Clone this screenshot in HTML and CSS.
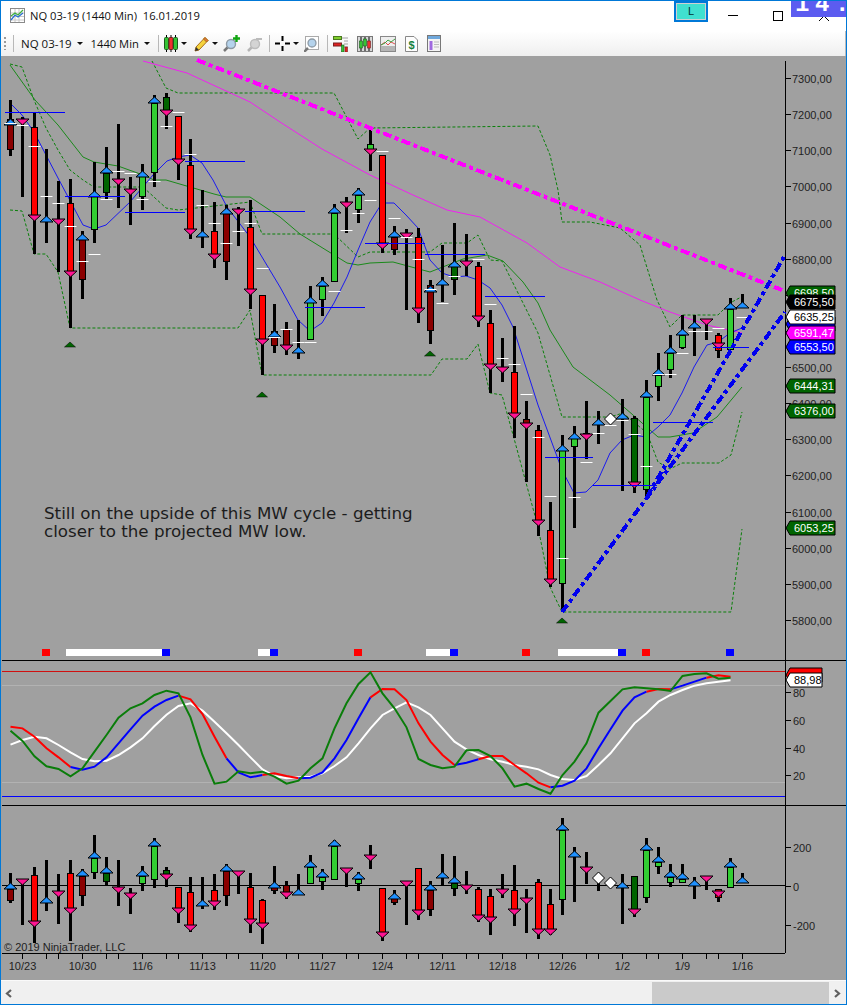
FILE: index.html
```html
<!DOCTYPE html>
<html>

<head>
    <meta charset="utf-8">
    <title>NQ 03-19 (1440 Min)</title>
    <link rel="stylesheet" href="styles.css">
</head>

<body>
    <div class="window">
        <div class="titlebar">
            <svg class="app_icon" width="15" height="15" viewBox="0 0 15 15">
                <rect x="0.5" y="0.5" width="14" height="14" fill="#fff" stroke="#8a8a8a"/>
                <path d="M1 5H14M1 8.5H14M1 12H14M5 1V14M9 1V14" stroke="#c8c8c8" fill="none"/>
                <path d="M1 12L5 7L8 9L13 5" stroke="#2b6fd0" stroke-width="1.3" fill="none"/>
                <path d="M1 8L5 5L8 7L13 2" stroke="#3fae3f" stroke-width="1.3" fill="none"/>
            </svg>
            <span class="title_text">NQ 03-19 (1440 Min)&nbsp; 16.01.2019</span>
            <div class="link_btn"><span>L</span></div>
            <div class="win_min"></div>
            <div class="win_max"></div>
            <svg class="win_close" width="10" height="10" viewBox="0 0 10 10">
                <path d="M0 0L10 10M10 0L0 10" stroke="#000" fill="none"/>
            </svg>
        </div>
        <div class="badge"><span>14.</span></div>

        <div class="toolbar">
            <div class="grip"></div>
            <div class="sep"></div>
            <span class="tb_label">NQ 03-19</span>
            <div class="caret"></div>
            <span class="tb_label tb_label2">1440 Min</span>
            <div class="caret"></div>
            <div class="sep sep_wide"></div>

            <svg class="tool near" width="14" height="17" viewBox="0 0 14 17">
                <path d="M2.5 0V17M7 0V17M11.5 0V17" stroke="#000"/>
                <rect x="0.5" y="2.5" width="4" height="12" rx="1" fill="#35c435" stroke="#1c5c1c"/>
                <rect x="5" y="2.5" width="4" height="12" rx="1" fill="#ef3030" stroke="#702020"/>
                <rect x="9.5" y="2.5" width="4" height="12" rx="1" fill="#35c435" stroke="#1c5c1c"/>
            </svg>
            <div class="caret"></div>

            <svg class="tool" width="15" height="16" viewBox="0 0 15 16">
                <path d="M1 15L2 11L11 1.5L14 4.5L5 14Z" fill="#f5d33c" stroke="#a8701c"/>
                <path d="M11 1.5L14 4.5L12.5 6L9.5 3Z" fill="#e8753c" stroke="#a8701c"/>
                <path d="M1 15L2 11L5 14Z" fill="#333"/>
            </svg>
            <div class="caret"></div>

            <svg class="tool near" width="17" height="17" viewBox="0 0 17 17">
                <path d="M1 16L5 12" stroke="#777" stroke-width="2.5"/>
                <circle cx="8" cy="9" r="4.5" fill="#b5d3ec" stroke="#8d9aa5" stroke-width="1.4"/>
                <path d="M13.5 0V7M10 3.5H17" stroke="#12a512" stroke-width="2.4"/>
            </svg>
            <svg class="tool" width="15" height="16" viewBox="0 0 15 16">
                <path d="M1 15L5 11" stroke="#b5b5b5" stroke-width="2.5"/>
                <circle cx="8" cy="8" r="4.5" fill="#d4d4d4" stroke="#bcbcbc" stroke-width="1.4"/>
                <path d="M9 3H15" stroke="#bbb" stroke-width="2"/>
            </svg>
            <div class="sep"></div>

            <svg class="tool near" width="15" height="15" viewBox="0 0 15 15">
                <path d="M7.5 0V5M7.5 10V15M0 7.5H5M10 7.5H15" stroke="#000" stroke-width="2"/>
            </svg>
            <div class="caret"></div>

            <svg class="tool near" width="15" height="16" viewBox="0 0 15 16">
                <rect x="1.5" y="0.5" width="13" height="13" fill="#fff" stroke="#aaa"/>
                <path d="M0 16L4 12" stroke="#777" stroke-width="2.5"/>
                <circle cx="8" cy="7" r="4" fill="#b5d3ec" stroke="#8d9aa5" stroke-width="1.3"/>
            </svg>
            <div class="sep sep_wide"></div>

            <svg class="tool near" width="15" height="17" viewBox="0 0 15 17">
                <path d="M9 3H15M11 6H15M11 9H15M11 12H15" stroke="#a0a0a0"/>
                <rect x="0.5" y="1.5" width="8" height="3" fill="#7fce2c" stroke="#4a7a20"/>
                <rect x="0.5" y="8" width="8" height="3" fill="#e02020" stroke="#7a2020"/>
                <rect x="8.5" y="10" width="2.5" height="7" fill="#35c435" stroke="#1c5c1c" stroke-width="0.6"/>
                <rect x="12" y="12" width="2.5" height="5" fill="#e02020" stroke="#7a2020" stroke-width="0.6"/>
            </svg>
            <svg class="tool wide" width="16" height="16" viewBox="0 0 16 16">
                <rect x="0.5" y="0.5" width="15" height="15" fill="#d8d8d8" stroke="#777"/>
                <path d="M4 1V15M8 1V15M12 1V15" stroke="#000"/>
                <rect x="2.5" y="5" width="3" height="7" fill="#35c435" stroke="#1c5c1c" stroke-width="0.6"/>
                <rect x="6.5" y="3" width="3" height="7" fill="#35c435" stroke="#1c5c1c" stroke-width="0.6"/>
                <rect x="10.5" y="5" width="3" height="7" fill="#ef3030" stroke="#702020" stroke-width="0.6"/>
            </svg>
            <svg class="tool" width="16" height="16" viewBox="0 0 16 16">
                <rect x="0.5" y="0.5" width="15" height="15" fill="#eeeeee" stroke="#888"/>
                <rect x="1" y="10" width="14" height="5" fill="#b5b5b5"/>
                <path d="M1 9L5 6L8 9L11 6L15 8" stroke="#e05050" fill="none"/>
                <path d="M1 9L5 7L8 4L11 6L15 3" stroke="#40a040" fill="none"/>
            </svg>
            <svg class="tool wide" width="13" height="16" viewBox="0 0 13 16">
                <path d="M0.5 0.5H9L12.5 4V15.5H0.5Z" fill="#fdfdfd" stroke="#888"/>
                <text class="dollar" x="6.5" y="12.5">$</text>
            </svg>
            <svg class="tool wide" width="14" height="17" viewBox="0 0 14 17">
                <rect x="0.5" y="0.5" width="13" height="16" fill="#f4f4f4" stroke="#777"/>
                <rect x="1" y="1" width="12" height="3" fill="#6fa8dc"/>
                <rect x="2.5" y="6" width="3" height="9" fill="#a06ae0"/>
                <path d="M7 7H12M7 9.5H12M7 12H12" stroke="#bbb"/>
            </svg>
            <div class="tb_end"></div>
        </div>

        <div class="chart_area">
            <svg id="chart" viewBox="1 56 845 924" width="845" height="924"></svg>
        </div>

        <div class="scrollbar">
            <svg class="arrow" width="8" height="9" viewBox="0 0 8 9">
                <path d="M6 1L2 4.5L6 8" stroke="#606060" stroke-width="2.2" fill="none"/>
            </svg>
            <div class="track"><div class="thumb"></div></div>
            <svg class="arrow" width="8" height="9" viewBox="0 0 8 9">
                <path d="M2 1L6 4.5L2 8" stroke="#606060" stroke-width="2.2" fill="none"/>
            </svg>
        </div>
    </div>
    <script src="chart.js"></script>
</body>

</html>
```

FILE: styles.css
```css
* {
    box-sizing: border-box;
}

body {
    margin: 0;
    width: 847px;
    height: 1005px;
    overflow: hidden;
    font-family: "Liberation Sans", Arial, sans-serif;
}

.window {
    position: relative;
    width: 847px;
    height: 1005px;
    border: 1px solid #0078d7;
    display: flex;
    flex-direction: column;
    background: #fff;
    overflow: hidden;
}

.titlebar {
    height: 30px;
    display: flex;
    align-items: center;
    padding-left: 9px;
    flex: none;
}

.app_icon {
    margin-top: -1px;
}

.title_text {
    margin-left: 5px;
    font-family: "Open Sans", sans-serif;
    font-size: 11.2px;
    color: #111;
    margin-top: -1px;
}

.link_btn {
    margin-left: auto;
    margin-top: -10px;
    width: 34px;
    height: 21px;
    border: 2px solid #0078d7;
    background: #40e0d0;
    box-shadow: inset 0 0 0 1px #d0d0d0;
    font-size: 11px;
    color: #033;
    text-align: center;
    line-height: 16px;
}

.win_min {
    margin-left: 20px;
    margin-top: -1px;
    width: 10px;
    height: 1px;
    background: #000;
}

.win_max {
    margin-left: 35px;
    margin-top: -1px;
    width: 10px;
    height: 10px;
    border: 1px solid #000;
}

.win_close {
    margin-left: 36px;
    margin-right: 17px;
    margin-top: -1px;
}

.badge {
    position: absolute;
    top: -1px;
    right: -1px;
    width: 56px;
    height: 17px;
    background: #5c5cf0;
    overflow: hidden;
}

.badge span {
    position: absolute;
    left: 4px;
    bottom: 0;
    font-family: "Liberation Mono", monospace;
    font-weight: bold;
    font-size: 24px;
    letter-spacing: 5.6px;
    line-height: 24px;
    color: #fff;
    white-space: pre;
}

.toolbar {
    height: 25px;
    flex: none;
    display: flex;
    align-items: center;
    padding-left: 3px;
    background: linear-gradient(#ffffff, #efefef);
}

.grip {
    width: 2px;
    height: 13px;
    background: repeating-linear-gradient(#9a9a9a 0 2px, transparent 2px 4px);
}

.sep {
    width: 1px;
    height: 17px;
    margin-left: 7px;
    background: #b8b8b8;
}

.sep_wide {
    margin-left: 8px;
}

.tb_label {
    margin-left: 7px;
    padding-right: 2px;
    font-family: "Open Sans", sans-serif;
    font-size: 11.5px;
    color: #111;
}

.tb_label2 {
    margin-left: 8px;
    font-size: 11.2px;
}

.caret {
    margin-left: 3px;
    width: 0;
    height: 0;
    border-left: 3px solid transparent;
    border-right: 3px solid transparent;
    border-top: 3px solid #111;
}

.tool {
    margin-left: 7px;
    flex: none;
}

.near {
    margin-left: 5px;
}

.wide {
    margin-left: 9px;
}

.dollar {
    font-family: "Liberation Sans", sans-serif;
    font-weight: bold;
    font-size: 11px;
    text-anchor: middle;
    fill: #16803c;
}

.tb_end {
    margin-left: auto;
    width: 3px;
    height: 25px;
    border-right: 1px solid #bbb;
}

.chart_area {
    height: 924px;
    flex: none;
    background: #a0a0a0;
}

#chart {
    display: block;
}

.scrollbar {
    flex: 1;
    display: flex;
    align-items: center;
    padding: 1px 0 0 0;
    background: #f0f0f0;
    border-top: 1px solid #fafafa;
}

.arrow {
    flex: none;
    margin: 0 5px 0 4px;
}

.track {
    flex: 1;
    height: 100%;
    position: relative;
    display: flex;
    justify-content: flex-end;
}

.thumb {
    width: 177px;
    height: 100%;
    background: #cacaca;
}

/* chart pieces */
.frame {
    stroke: #000;
    stroke-width: 1;
    shape-rendering: crispEdges;
}

.axis_text {
    font-family: "Liberation Sans", sans-serif;
    font-size: 11px;
    fill: #222;
}

.date_text {
    text-anchor: middle;
}

.tag_text {
    font-family: "Liberation Sans", sans-serif;
    font-size: 11px;
    fill: #fff;
}

.tag_dark {
    fill: #000;
}

.tag {
    stroke: #000;
    stroke-width: 1;
}

.note {
    font-family: "DejaVu Sans", sans-serif;
    font-size: 16.7px;
    fill: #1c1c1c;
}

.copyright {
    font-family: "Liberation Sans", sans-serif;
    font-size: 11px;
    fill: #222;
}

.thin {
    fill: none;
    stroke-width: 1;
}

.dashed {
    stroke-dasharray: 3 2;
    stroke: #0a800a;
}

.st_line {
    fill: none;
    stroke-width: 2;
}

.trend {
    fill: none;
    stroke-width: 4;
    stroke-dasharray: 9 3.5 4 3.5;
    shape-rendering: crispEdges;
}

.wick {
    fill: #000;
}

.body {
    stroke: #000;
    stroke-width: 1;
    shape-rendering: crispEdges;
}

.mark {
    stroke: #000;
    stroke-width: 1;
}

.mark_up {
    fill: #1e90ff;
}

.mark_down {
    fill: #ff1493;
}

.diamond {
    fill: #fff;
    stroke: #000;
}

.hook {
    fill: #006400;
    stroke: #000;
    stroke-width: 0.5;
}

.close_dash {
    fill: #fff;
}

.pivot {
    fill: #0000ff;
}
```

FILE: chart.js
```js
var COLORS = { r: "#ff0000", g: "#32cd32", dr: "#8b0000", dg: "#006400" };

// wick top, wick bottom, body top, body bottom, body colour, marker, marker y, close dash y
var priceBars = [
    [100, 156, 119, 149, "dr", "u", 125, 123],
    [117, 197, 0, 0, "", "d", 119, 125],
    [113, 254, 127, 216, "r", "d", 215, 146],
    [149, 243, 0, 0, "", "u", 222, 196],
    [181, 272, 0, 0, "", "d", 219, 203],
    [179, 328, 203, 272, "r", "d", 271, 226],
    [231, 299, 239, 279, "dr", "u", 240, 261],
    [162, 243, 196, 229, "g", "u", 197, 254],
    [147, 199, 173, 192, "dg", "u", 173, 199],
    [124, 208, 0, 0, "", "d", 179, 171],
    [177, 225, 0, 0, "", "d", 189, 173],
    [164, 210, 176, 196, "g", "u", 177, 199],
    [95, 187, 103, 172, "g", "u", 103, 181],
    [93, 129, 97, 111, "dg", "d", 110, 126],
    [116, 180, 116, 159, "r", "d", 159, 112],
    [139, 239, 165, 230, "r", "d", 229, 154],
    [190, 248, 0, 0, "", "u", 237, 205],
    [202, 268, 231, 255, "r", "d", 254, 223],
    [205, 280, 213, 261, "dr", "u", 214, 243],
    [207, 246, 0, 0, "", "d", 209, 231],
    [200, 309, 227, 290, "r", "d", 289, 223],
    [295, 375, 295, 340, "r", "d", 339, 268],
    [304, 353, 331, 345, "dr", "u", 337, 337],
    [322, 355, 329, 345, "dr", "d", 345, 329],
    [320, 359, 0, 0, "", "u", 353, 342],
    [286, 339, 302, 339, "g", "u", 303, 342],
    [277, 316, 286, 299, "g", "u", 286, 0],
    [204, 281, 213, 281, "g", "u", 213, 291],
    [197, 233, 0, 0, "", "d", 202, 230],
    [188, 223, 195, 209, "g", "u", 195, 213],
    [129, 171, 144, 150, "g", "d", 149, 200],
    [155, 253, 155, 243, "r", "d", 243, 151],
    [226, 255, 237, 249, "dr", "u", 237, 218],
    [229, 310, 0, 0, "", "d", 233, 237],
    [228, 323, 237, 309, "r", "d", 308, 259],
    [280, 344, 285, 330, "dr", "u", 292, 289],
    [245, 302, 0, 0, "", "u", 285, 303],
    [223, 295, 263, 279, "dg", "u", 267, 276],
    [234, 276, 0, 0, "", "d", 261, 0],
    [262, 327, 266, 317, "r", "d", 316, 259],
    [310, 393, 323, 365, "r", "d", 364, 304],
    [338, 382, 0, 0, "", "d", 367, 358],
    [326, 438, 372, 414, "r", "d", 413, 364],
    [401, 482, 419, 423, "dr", "d", 423, 394],
    [425, 536, 430, 521, "r", "d", 520, 437],
    [502, 587, 530, 580, "r", "d", 579, 496],
    [435, 612, 450, 583, "g", "u", 451, 558],
    [426, 528, 438, 446, "g", "u", 439, 497],
    [401, 459, 433, 435, "dg", "d", 434, 462],
    [411, 444, 0, 0, "", "u", 425, 433],
    [0, 0, 0, 0, "", "w", 419, 425],
    [399, 491, 0, 0, "", "u", 419, 420],
    [416, 493, 418, 483, "dg", "d", 482, 434],
    [380, 497, 397, 489, "g", "u", 397, 466],
    [353, 401, 375, 386, "g", "u", 375, 374],
    [335, 378, 353, 369, "g", "u", 353, 374],
    [315, 349, 335, 347, "g", "u", 335, 353],
    [315, 356, 0, 0, "", "u", 328, 331],
    [320, 340, 0, 0, "", "d", 319, 331],
    [333, 358, 335, 350, "r", "d", 343, 328],
    [298, 349, 309, 349, "g", "u", 309, 0],
    [294, 308, 0, 0, "", "u", 308, 317]
];

var lowerBars = [
    [873, 903, 889, 900, "dr", "u", 889],
    [880, 925, 0, 0, "", "d", 879],
    [867, 943, 875, 921, "r", "d", 921],
    [860, 911, 0, 0, "", "u", 903],
    [874, 924, 0, 0, "", "d", 891],
    [860, 941, 873, 908, "r", "d", 908],
    [869, 906, 876, 895, "dr", "u", 876],
    [835, 879, 858, 872, "g", "u", 858],
    [857, 885, 873, 881, "dg", "u", 873],
    [860, 906, 0, 0, "", "d", 887],
    [888, 914, 0, 0, "", "d", 893],
    [866, 891, 876, 883, "g", "u", 876],
    [838, 888, 846, 879, "g", "u", 846],
    [867, 887, 870, 875, "dg", "d", 874],
    [887, 923, 887, 908, "r", "d", 908],
    [877, 932, 892, 925, "r", "d", 925],
    [877, 909, 0, 0, "", "u", 906],
    [874, 910, 890, 901, "r", "d", 901],
    [864, 906, 871, 895, "dr", "u", 871],
    [871, 894, 0, 0, "", "d", 871],
    [873, 933, 887, 919, "r", "d", 919],
    [899, 944, 900, 923, "r", "d", 923],
    [866, 894, 886, 890, "dr", "u", 888],
    [881, 899, 885, 892, "dr", "d", 892],
    [874, 895, 0, 0, "", "u", 895],
    [855, 884, 867, 883, "g", "u", 867],
    [869, 890, 877, 881, "g", "u", 877],
    [840, 879, 846, 879, "g", "u", 846],
    [873, 887, 0, 0, "", "d", 868],
    [872, 891, 879, 883, "g", "u", 879],
    [845, 869, 0, 0, "", "d", 855],
    [888, 941, 888, 932, "r", "d", 932],
    [890, 905, 898, 902, "dr", "u", 899],
    [883, 925, 0, 0, "", "d", 881],
    [868, 920, 868, 910, "r", "d", 910],
    [881, 916, 890, 909, "dr", "u", 890],
    [854, 885, 0, 0, "", "u", 878],
    [856, 896, 883, 888, "dg", "u", 883],
    [871, 894, 0, 0, "", "d", 885],
    [887, 922, 889, 915, "r", "d", 915],
    [889, 935, 896, 917, "r", "d", 917],
    [874, 898, 0, 0, "", "d", 889],
    [865, 926, 890, 909, "r", "d", 909],
    [889, 933, 0, 0, "", "d", 898],
    [879, 939, 882, 929, "r", "d", 929],
    [889, 935, 904, 929, "r", "d", 929],
    [818, 915, 830, 899, "g", "u", 830],
    [847, 902, 0, 0, "", "u", 857],
    [852, 884, 0, 0, "", "d", 867],
    [878, 891, 0, 0, "", "w", 878],
    [0, 0, 0, 0, "", "w", 883],
    [874, 924, 0, 0, "", "u", 888],
    [876, 917, 876, 909, "dg", "d", 909],
    [838, 903, 850, 897, "g", "u", 850],
    [847, 874, 862, 866, "g", "u", 862],
    [864, 887, 877, 882, "g", "u", 877],
    [864, 882, 879, 882, "g", "u", 879],
    [877, 899, 0, 0, "", "u", 886],
    [876, 890, 0, 0, "", "d", 876],
    [889, 902, 889, 897, "r", "d", 891],
    [858, 887, 867, 887, "g", "u", 867],
    [873, 883, 0, 0, "", "u", 883]
];

var envTop = "152,61 166,88 178,93 334,93 358,139 370,128 538,126 550,155 558,190 562,222 590,222 620,228 640,245 657,300 670,327 682,315 718,315 730,303 745,295";
var envMid = "10,64 22,67 34,100 46,128 58,150 70,170 83,180 94,187 143,187 166,208 178,210 250,202 262,234 334,234 358,257 370,252 430,252 442,243 467,243 478,235 490,260 502,261 538,333 562,417 610,417 623,413 647,433 658,462 670,469 682,463 719,463 731,455 742,412";
var envLow = "10,210 22,211 34,254 46,254 58,272 70,328 238,328 250,310 262,375 431,375 442,359 467,359 478,344 490,393 502,395 515,442 538,527 550,587 562,612 731,612 742,529";
var midGreen = "10,65 35,100 58,125 83,157 94,162 118,166 143,175 154,180 166,180 190,187 214,194 226,197 250,197 262,205 280,217 300,234 347,263 358,265 370,263 393,262 430,272 463,259 487,255 503,261 523,282 538,303 550,330 573,367 610,395 633,415 658,437 670,437 693,433 717,417 742,387";
var midBlue = "10,103 22,115 34,132 58,178 83,225 94,229 106,225 130,202 153,175 167,161 178,157 190,155 202,163 213,180 227,207 250,237 280,287 298,320 310,331 322,323 334,303 347,277 358,250 370,222 382,203 394,203 406,215 418,228 430,260 442,273 454,277 466,276 478,280 490,288 502,305 513,327 538,405 562,470 574,493 586,492 598,480 610,453 622,440 634,435 646,437 658,427 670,415 682,393 694,367 707,345 718,342 730,333 742,328";
var midPink = "143,61 187,73 250,102 280,122 322,149 370,175 413,195 447,210 480,217 527,243 560,267 600,282 640,300 670,312 707,325 742,333";

// y values of the stochastic lines in zoomed units, one per bar
var stWhite = [314, 300, 290, 295, 315, 337, 357, 364, 362, 345, 322, 295, 258, 224, 198, 190, 212, 245, 280, 315, 352, 388, 408, 415, 412, 410, 400, 378, 352, 310, 265, 225, 205, 187, 202, 225, 265, 305, 328, 345, 358, 365, 375, 380, 388, 405, 417, 420, 408, 375, 340, 295, 250, 220, 185, 165, 150, 137, 130, 125, 121];
var stMid = [260, 265, 290, 325, 352, 381, 389, 380, 352, 310, 268, 227, 200, 180, 167, 178, 222, 290, 355, 397, 412, 405, 400, 408, 415, 413, 397, 355, 300, 235, 172, 147, 148, 180, 250, 305, 345, 375, 368, 358, 348, 348, 375, 400, 428, 442, 437, 422, 385, 325, 268, 212, 172, 155, 147, 148, 137, 125, 113, 106, 110];
var stGreen = [272, 303, 349, 379, 387, 409, 385, 335, 285, 233, 205, 190, 165, 152, 160, 232, 345, 431, 425, 394, 400, 395, 410, 431, 422, 385, 355, 265, 190, 132, 97, 160, 205, 262, 357, 375, 385, 380, 331, 330, 348, 385, 440, 431, 447, 461, 405, 365, 310, 218, 183, 148, 142, 145, 148, 153, 108, 102, 100, 116, 113];
// bar index where the middle line changes colour
var stSwitch = [[0, "#ff0000"], [5, "#0000ff"], [14, "#ff0000"], [18, "#0000ff"], [21, "#ff0000"], [24, "#0000ff"], [30, "#ff0000"], [37, "#0000ff"], [39, "#ff0000"], [45, "#0000ff"], [53, "#ff0000"], [55, "#0000ff"], [58, "#ff0000"]];

var pivots = [[5, 65, 112], [185, 245, 161], [65, 125, 196], [125, 185, 212], [245, 305, 211], [305, 365, 307], [365, 425, 243], [425, 485, 254], [485, 545, 296], [545, 593, 457], [593, 657, 485], [653, 713, 422], [713, 749, 347]];

var squares = [[42, 50, "#ff0000"], [66, 162, "#ffffff"], [162, 170, "#0000ff"], [258, 270, "#ffffff"], [270, 278, "#0000ff"], [354, 362, "#ff0000"], [426, 450, "#ffffff"], [450, 458, "#0000ff"], [522, 530, "#ff0000"], [558, 618, "#ffffff"], [618, 626, "#0000ff"], [642, 650, "#ff0000"], [726, 734, "#0000ff"]];

var dates = [[1, "10/23"], [6, "10/30"], [11, "11/6"], [16, "11/13"], [21, "11/20"], [26, "11/27"], [31, "12/4"], [36, "12/11"], [41, "12/18"], [46, "12/26"], [51, "1/2"], [56, "1/9"], [61, "1/16"]];

var out = "";

function barX(i) {
    return 10.5 + 12 * i;
}

function rect(x, y, w, h, cls, fill) {
    out += '<rect x="' + x + '" y="' + y + '" width="' + w + '" height="' + h + '"' +
        (cls ? ' class="' + cls + '"' : "") + (fill ? ' fill="' + fill + '"' : "") + '/>';
}

function line(x1, y1, x2, y2, cls, color) {
    out += '<line x1="' + x1 + '" y1="' + y1 + '" x2="' + x2 + '" y2="' + y2 + '" class="' + cls + '"' +
        (color ? ' stroke="' + color + '"' : "") + '/>';
}

function poly(points, cls, color) {
    out += '<polyline points="' + points + '" class="' + cls + '"' + (color ? ' stroke="' + color + '"' : "") + '/>';
}

function text(x, y, str, cls) {
    out += '<text x="' + x + '" y="' + y + '" class="' + cls + '">' + str + '</text>';
}

function drawMarker(x, kind, y) {
    if (kind === "u") {
        out += '<path class="mark mark_up" d="M' + x + ' ' + (y - 6) + 'L' + (x - 6.5) + ' ' + y + 'H' + (x + 6.5) + 'Z"/>';
    } else if (kind === "d") {
        out += '<path class="mark mark_down" d="M' + (x - 6.5) + ' ' + y + 'H' + (x + 6.5) + 'L' + x + ' ' + (y + 6) + 'Z"/>';
    } else {
        out += '<path class="diamond" d="M' + x + ' ' + (y - 6) + 'L' + (x + 6) + ' ' + y + 'L' + x + ' ' + (y + 6) + 'L' + (x - 6) + ' ' + y + 'Z"/>';
    }
}

function drawBars(bars) {
    for (var i = 0; i < bars.length; i++) {
        var b = bars[i];
        var x = barX(i);
        if (b[1]) {
            rect(x - 1.5, b[0], 3, b[1] - b[0], "wick");
        }
        if (b[4]) {
            rect(x - 3, b[2] + 0.5, 6, b[3] - b[2], "body", COLORS[b[4]]);
        }
        drawMarker(x, b[5], b[6]);
    }
}

function drawTag(y, left, right, fill, label, dark) {
    var d = "M" + left + " " + y + "L" + (left + 4) + " " + (y - 7) + "H" + right + "V" + (y + 7) + "H" + (left + 4) + "Z";
    out += '<path class="tag" d="' + d + '" fill="' + fill + '"/>';
    if (label) {
        text(left + 8, y + 4, label, dark ? "tag_text tag_dark" : "tag_text");
    }
}

function stY(v) {
    return 640 + v / 3;
}

function drawStochastic() {
    var i, pts = "";
    for (i = 0; i < stWhite.length; i++) {
        pts += barX(i) + "," + stY(stWhite[i]) + " ";
    }
    poly(pts, "st_line", "#ffffff");

    for (var s = 0; s < stSwitch.length; s++) {
        var end = s + 1 < stSwitch.length ? stSwitch[s + 1][0] : stMid.length - 1;
        pts = "";
        for (i = stSwitch[s][0]; i <= end; i++) {
            pts += barX(i) + "," + stY(stMid[i]) + " ";
        }
        poly(pts, "st_line", stSwitch[s][1]);
    }

    pts = "";
    for (i = 0; i < stGreen.length; i++) {
        pts += barX(i) + "," + stY(stGreen[i]) + " ";
    }
    poly(pts, "st_line", "#0a7d0a");
}

function drawAxes() {
    var i, y;
    line(785, 61, 785, 953, "frame");
    line(2, 660.5, 847, 660.5, "frame");
    line(2, 805.5, 847, 805.5, "frame");
    line(2, 953.5, 785, 953.5, "frame");
    line(2, 885.5, 785, 885.5, "frame");

    for (i = 0; i <= 15; i++) {
        y = Math.round(78 + i * 36.13) + 0.5;
        line(785, y, 791, y, "frame");
        text(792, y + 4, (7300 - i * 100) + ",00", "axis_text");
    }

    var stLabels = [[692.5, "80"], [720.5, "60"], [748.5, "40"], [775.5, "20"], [847.5, "200"], [886.5, "0"], [925.5, "-200"]];
    for (i = 0; i < stLabels.length; i++) {
        line(785, stLabels[i][0], 791, stLabels[i][0], "frame");
        text(793, stLabels[i][0] + 4, stLabels[i][1], "axis_text");
    }

    for (i = 1; i <= 61; i++) {
        var r = (i - 1) % 5;
        if (r === 0 || r === 2 || r === 3) {
            line(barX(i), 953, barX(i), 959, "frame");
        }
    }
    for (i = 0; i < dates.length; i++) {
        text(barX(dates[i][0]), 970, dates[i][1], "axis_text date_text");
    }
}

function drawChart() {
    var i;

    line(2, 685.5, 785, 685.5, "thin", "#b2b2b2");
    line(2, 782.5, 785, 782.5, "thin", "#b2b2b2");
    line(2, 671.5, 785, 671.5, "thin", "#d01010");
    line(2, 796.5, 785, 796.5, "thin", "#0000ff");

    drawAxes();

    poly(envTop, "thin dashed");
    poly(envMid, "thin dashed");
    poly(envLow, "thin dashed");
    poly(midGreen, "thin", "#1a8a1a");
    poly(midPink, "thin", "#f020f0");
    poly(midBlue, "thin", "#1a1af0");

    drawBars(priceBars);

    for (i = 0; i < pivots.length; i++) {
        rect(pivots[i][0], pivots[i][2], pivots[i][1] - pivots[i][0], 1, "pivot");
    }
    for (i = 0; i < priceBars.length; i++) {
        if (priceBars[i][7]) {
            rect(barX(i) - 6, priceBars[i][7], 12, 1, "close_dash");
        }
    }

    var hooks = [[70, 347], [262, 397], [430, 356], [562, 623]];
    for (i = 0; i < hooks.length; i++) {
        var h = hooks[i];
        out += '<path class="hook" d="M' + h[0] + ' ' + (h[1] - 5) + 'L' + (h[0] - 5.5) + ' ' + h[1] + 'H' + (h[0] + 5.5) + 'Z"/>';
    }

    line(197, 60, 782, 290, "trend", "#ff00ff");
    line(562, 612, 785, 312, "trend", "#0000ee");
    line(647, 497, 785, 255, "trend", "#0000ee");

    text(44, 519, "Still on the upside of this MW cycle - getting", "note");
    text(44, 537, "closer to the projected MW low.", "note");

    for (i = 0; i < squares.length; i++) {
        rect(squares[i][0], 649, squares[i][1] - squares[i][0], 7, "", squares[i][2]);
    }

    drawStochastic();
    drawBars(lowerBars);

    text(4, 951, "© 2019 NinjaTrader, LLC", "copyright");

    drawTag(293, 786, 835, "#006400", "6698,50");
    drawTag(302, 786, 835, "#000000", "6675,50");
    drawTag(324, 786, 835, "#0000ff", "");
    drawTag(317, 786, 835, "#ffffff", "6635,25", true);
    drawTag(333, 786, 835, "#ff00ff", "6591,47");
    drawTag(347, 786, 835, "#0000ff", "6553,50");
    drawTag(386, 786, 835, "#006400", "6444,31");
    drawTag(411, 786, 835, "#006400", "6376,00");
    drawTag(528, 786, 835, "#006400", "6053,25");
    drawTag(675, 786, 822, "#ff0000", "");
    drawTag(680, 786, 822, "#ffffff", "88,98", true);

    document.getElementById("chart").innerHTML = out;
}

drawChart();
```
